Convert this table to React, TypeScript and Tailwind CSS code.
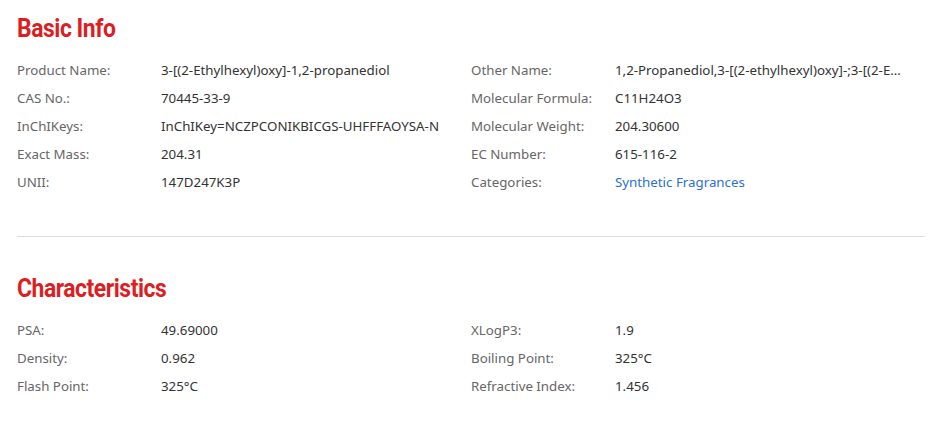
const basicInfo = [
  [
    { label: "Product Name:", value: "3-[(2-Ethylhexyl)oxy]-1,2-propanediol" },
    { label: "CAS No.:", value: "70445-33-9" },
    { label: "InChIKeys:", value: "InChIKey=NCZPCONIKBICGS-UHFFFAOYSA-N" },
    { label: "Exact Mass:", value: "204.31" },
    { label: "UNII:", value: "147D247K3P" },
  ],
  [
    { label: "Other Name:", value: "1,2-Propanediol,3-[(2-ethylhexyl)oxy]-;3-[(2-Ethylhexyl)oxy]-1,2-propanediol" },
    { label: "Molecular Formula:", value: "C11H24O3" },
    { label: "Molecular Weight:", value: "204.30600" },
    { label: "EC Number:", value: "615-116-2" },
    { label: "Categories:", value: "Synthetic Fragrances", link: true },
  ],
];

const characteristics = [
  [
    { label: "PSA:", value: "49.69000" },
    { label: "Density:", value: "0.962" },
    { label: "Flash Point:", value: "325°C" },
  ],
  [
    { label: "XLogP3:", value: "1.9" },
    { label: "Boiling Point:", value: "325°C" },
    { label: "Refractive Index:", value: "1.456" },
  ],
];

type Row = { label: string; value: string; link?: boolean };

const InfoColumn = ({ rows }: { rows: Row[] }) => (
  <ul className="flex flex-col">
    {rows.map((row, index) => (
      <li key={index} className="flex h-[28px] items-center">
        <span className="w-[144px] shrink-0 text-[#666]">{row.label}</span>
        <span
          className={`min-w-0 w-[290px] truncate ${row.link ? "text-[#2b6fd6]" : "text-[#333]"}`}
        >
          {row.value}
        </span>
      </li>
    ))}
  </ul>
);

const SectionTitle = ({ children }: { children: string }) => (
  <h2
    className="text-[26px] font-bold leading-none tracking-[-0.5px] text-[#dc1e23] origin-left scale-x-[0.88]"
    style={{ fontFamily: '"Liberation Sans Narrow", "Roboto", "Liberation Sans", sans-serif' }}
  >
    {children}
  </h2>
);

export default function App() {
  return (
    <div
      className="w-[933px] h-[423px] bg-white px-[17px] pt-[15px] text-[13.3px]"
      style={{ fontFamily: '"Noto Sans", "Open Sans", sans-serif' }}
    >
      <section>
        <SectionTitle>Basic Info</SectionTitle>
        <div className="mt-[16px] grid grid-cols-2 w-[908px]">
          <InfoColumn rows={basicInfo[0]} />
          <InfoColumn rows={basicInfo[1]} />
        </div>
      </section>

      <hr className="mt-[39px] w-[908px] border-t border-[#ddd]" />

      <section className="mt-[38px]">
        <SectionTitle>Characteristics</SectionTitle>
        <div className="mt-[16px] grid grid-cols-2 w-[908px]">
          <InfoColumn rows={characteristics[0]} />
          <InfoColumn rows={characteristics[1]} />
        </div>
      </section>
    </div>
  );
}
